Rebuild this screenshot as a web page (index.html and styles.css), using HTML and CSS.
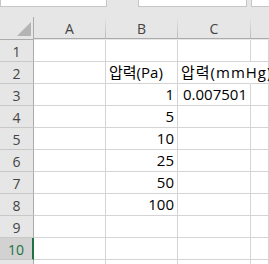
FILE: index.html
```html
<!DOCTYPE html>
<html lang="ko">
<head>
    <meta charset="UTF-8">
    <title>Sheet</title>
    <link rel="stylesheet" href="styles.css">
</head>
<body>
    <div class="topbar">
        <div class="box name-box"></div>
        <div class="box formula-box"></div>
        <div class="box extra-box"></div>
    </div>
    <div class="sheet">
        <div class="corner"><span class="tri"></span></div>
        <div class="col-head">A</div>
        <div class="col-head">B</div>
        <div class="col-head">C</div>
        <div class="col-head last"></div>

        <div class="row-head">1</div><div class="cell"></div><div class="cell"></div><div class="cell"></div><div class="cell"></div>
        <div class="row-head">2</div><div class="cell"></div><div class="cell text">압력(Pa)</div><div class="cell text over">압력(mmHg)</div><div class="cell"></div>
        <div class="row-head">3</div><div class="cell"></div><div class="cell num">1</div><div class="cell num">0.007501</div><div class="cell"></div>
        <div class="row-head">4</div><div class="cell"></div><div class="cell num">5</div><div class="cell"></div><div class="cell"></div>
        <div class="row-head">5</div><div class="cell"></div><div class="cell num">10</div><div class="cell"></div><div class="cell"></div>
        <div class="row-head">6</div><div class="cell"></div><div class="cell num">25</div><div class="cell"></div><div class="cell"></div>
        <div class="row-head">7</div><div class="cell"></div><div class="cell num">50</div><div class="cell"></div><div class="cell"></div>
        <div class="row-head">8</div><div class="cell"></div><div class="cell num">100</div><div class="cell"></div><div class="cell"></div>
        <div class="row-head">9</div><div class="cell"></div><div class="cell"></div><div class="cell"></div><div class="cell"></div>
        <div class="row-head selected">10</div><div class="cell"></div><div class="cell"></div><div class="cell"></div><div class="cell"></div>
        <div class="row-head"></div><div class="cell"></div><div class="cell"></div><div class="cell"></div><div class="cell"></div>
    </div>
</body>
</html>
```

FILE: styles.css
```css
body {
    margin: 0;
    padding: 0;
    width: 269px;
    height: 264px;
    overflow: hidden;
    background-color: #fff;
    font-family: 'Open Sans', 'Noto Sans CJK KR', sans-serif;
}
.topbar {
    display: flex;
    height: 17px;
    background-color: #e6e6e6;
}
.box {
    height: 7px;
    box-sizing: border-box;
    background-color: #fff;
    border: 1px solid #c6c6c6;
    border-top: none;
}
.name-box {
    width: 107px;
}
.formula-box {
    width: 109px;
    margin-left: 31px;
}
.extra-box {
    flex: 1;
    margin-left: 4px;
    border-right: none;
}
.sheet {
    display: grid;
    grid-template-columns: 34px 72px 72px 73px 1fr;
    grid-template-rows: 23px repeat(11, 22px);
}
.corner, .col-head, .row-head {
    background-color: #e6e6e6;
    color: #444;
    font-size: 14px;
    box-sizing: border-box;
}
.corner {
    position: relative;
    border-right: 1px solid #ababab;
    border-bottom: 1px solid #ababab;
}
.tri {
    position: absolute;
    right: 2px;
    bottom: 3px;
    width: 0;
    height: 0;
    border-left: 14px solid transparent;
    border-bottom: 14px solid #b4b4b4;
}
.col-head {
    display: flex;
    align-items: center;
    justify-content: center;
    border-bottom: 1px solid #ababab;
    border-right: 1px solid transparent;
    border-image: linear-gradient(to bottom, #e6e6e6, #b8b8b8) 0 1 0 0;
    padding-top: 1px;
    box-shadow: inset 0 -1px 0 #ababab;
}
.col-head.last {
    border-right: none;
}
.row-head {
    display: flex;
    align-items: center;
    justify-content: center;
    border-right: 1px solid #ababab;
    border-bottom: 1px solid #c8c8c8;
    padding-top: 1px;
}
.row-head.selected {
    background-color: #d2d2d2;
    color: #217346;
    border-right: 2px solid #217346;
}
.cell {
    box-sizing: border-box;
    border-right: 1px solid #d4d4d4;
    border-bottom: 1px solid #d4d4d4;
    font-size: 15px;
    color: #000;
    display: flex;
    align-items: flex-end;
    padding: 0 3px 1px 3px;
    white-space: nowrap;
    line-height: 19px;
}
.cell.num {
    justify-content: flex-end;
}
.cell.over {
    overflow: visible;
    position: relative;
    z-index: 1;
    letter-spacing: 1px;
    border-right-color: transparent;
}
```
